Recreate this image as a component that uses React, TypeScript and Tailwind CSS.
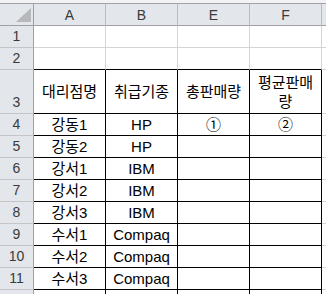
const cols = ["A", "B", "E", "F"];

const rows: { n: number; h: string; cells: string[] }[] = [
  { n: 1, h: "h-[22px]", cells: ["", "", "", ""] },
  { n: 2, h: "h-[22px]", cells: ["", "", "", ""] },
  { n: 3, h: "h-[44px]", cells: ["대리점명", "취급기종", "총판매량", "평균판매량"] },
  { n: 4, h: "h-[22px]", cells: ["강동1", "HP", "①", "②"] },
  { n: 5, h: "h-[22px]", cells: ["강동2", "HP", "", ""] },
  { n: 6, h: "h-[22px]", cells: ["강서1", "IBM", "", ""] },
  { n: 7, h: "h-[22px]", cells: ["강서2", "IBM", "", ""] },
  { n: 8, h: "h-[22px]", cells: ["강서3", "IBM", "", ""] },
  { n: 9, h: "h-[22px]", cells: ["수서1", "Compaq", "", ""] },
  { n: 10, h: "h-[22px]", cells: ["수서2", "Compaq", "", ""] },
  { n: 11, h: "h-[22px]", cells: ["수서3", "Compaq", "", ""] },
  { n: 12, h: "h-[22px]", cells: ["", "", "", ""] },
];

const App = () => {
  return (
    <div className="w-[326px] h-[294px] overflow-hidden bg-white font-['Liberation_Sans','Noto_Sans_CJK_KR',sans-serif] text-[15px] text-black">
      <div className="h-[4px] bg-[#f2f2f2] border-b border-[#a3a4a8]" />
      <div className="grid grid-cols-[34px_72px_72px_72px_72px_4px]">
        {/* column headers */}
        <div className="relative h-[22px] bg-[#e3e6ea] border-r border-b border-[#9ea0a5]">
          <svg className="absolute left-[16px] top-[4px]" width="15" height="14" viewBox="0 0 15 14">
            <polygon points="0,14 15,14 15,0" fill="#b6b8bc" />
          </svg>
        </div>
        {cols.map((c) => (
          <div
            key={c}
            className="h-[22px] bg-[#e3e6ea] border-r border-r-[#b9bbbf] border-b border-b-[#9ea0a5] flex items-center justify-center text-[14px] text-[#3a3a3a] leading-none"
          >
            {c}
          </div>
        ))}
        <div className="h-[22px] bg-[#e3e6ea] border-b border-[#9ea0a5]" />

        {rows.map((r) => (
          <Row key={r.n} n={r.n} h={r.h} cells={r.cells} />
        ))}
      </div>
    </div>
  );
};

const Row = ({ n, h, cells }: { n: number; h: string; cells: string[] }) => {
  const bottomBlack = n >= 2;
  const sideBlack = n >= 3;
  return (
    <>
      <div
        className={`${h} bg-[#e3e6ea] border-r border-r-[#9ea0a5] border-b border-b-[#c3c5c9] flex items-end justify-center pb-[1px] text-[14px] leading-[20px] text-[#3a3a3a]`}
      >
        {n < 12 ? n : ""}
      </div>
      {cells.map((t, i) => (
        <div
          key={i}
          className={`${h} border-r border-b flex items-center justify-center text-center leading-[19px] px-[3px] ${
            sideBlack ? "border-r-black" : "border-r-[#d4d4d4]"
          } ${bottomBlack ? "border-b-black" : "border-b-[#d4d4d4]"}`}
        >
          {t}
        </div>
      ))}
      <div className={`${h} border-b border-[#d4d4d4]`} />
    </>
  );
};

export default App;
